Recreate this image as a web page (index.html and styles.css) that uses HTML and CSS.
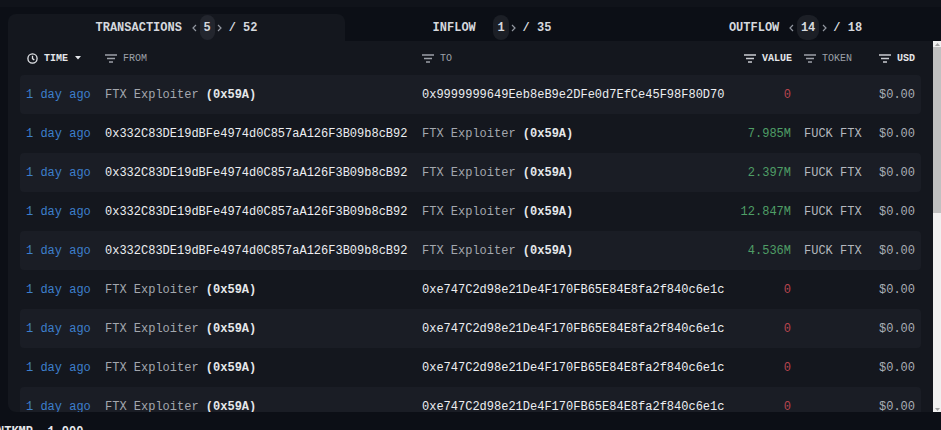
FILE: index.html
```html
<!DOCTYPE html>
<html>
<head>
<meta charset="utf-8">
<link rel="stylesheet" href="styles.css">
</head>
<body>
<div class="topstrip"></div>
<div class="card">
  <div class="tabs">
    <div class="tab active">
      <span class="tab-label">TRANSACTIONS</span>
      <span class="pager">
        <span class="chev"><svg width="5" height="8" viewBox="0 0 5 8"><path d="M4 1 L1 4 L4 7" fill="none" stroke="#9297a0" stroke-width="1.2"/></svg></span>
        <span class="pill">5</span>
        <span class="chev"><svg width="5" height="8" viewBox="0 0 5 8"><path d="M1 1 L4 4 L1 7" fill="none" stroke="#9297a0" stroke-width="1.2"/></svg></span>
        <span class="total">/ 52</span>
      </span>
    </div>
    <div class="tab">
      <span class="tab-label">INFLOW</span>
      <span class="pager">
        <span class="chev hidden"><svg width="5" height="8" viewBox="0 0 5 8"><path d="M4 1 L1 4 L4 7" fill="none" stroke="#9297a0" stroke-width="1.2"/></svg></span>
        <span class="pill">1</span>
        <span class="chev"><svg width="5" height="8" viewBox="0 0 5 8"><path d="M1 1 L4 4 L1 7" fill="none" stroke="#9297a0" stroke-width="1.2"/></svg></span>
        <span class="total">/ 35</span>
      </span>
    </div>
    <div class="tab">
      <span class="tab-label">OUTFLOW</span>
      <span class="pager">
        <span class="chev"><svg width="5" height="8" viewBox="0 0 5 8"><path d="M4 1 L1 4 L4 7" fill="none" stroke="#9297a0" stroke-width="1.2"/></svg></span>
        <span class="pill">14</span>
        <span class="chev"><svg width="5" height="8" viewBox="0 0 5 8"><path d="M1 1 L4 4 L1 7" fill="none" stroke="#9297a0" stroke-width="1.2"/></svg></span>
        <span class="total">/ 18</span>
      </span>
    </div>
  </div>
  <div class="panel">
    <div class="table">
    <div class="head">
      <div class="hcell strong">
        <svg class="ico" width="11" height="11" viewBox="0 0 11 11"><circle cx="5.5" cy="5.5" r="4.6" fill="none" stroke="#e4e6ea" stroke-width="1.3"/><path d="M5.5 2.8 V5.6 L7.3 7" fill="none" stroke="#e4e6ea" stroke-width="1.3"/></svg>
        <span>TIME</span>
        <svg class="caret" width="6" height="4" viewBox="0 0 6 4"><path d="M0 0 H6 L3 3.5 Z" fill="#e4e6ea"/></svg>
      </div>
      <div class="hcell">
        <svg class="ico" width="12" height="9" viewBox="0 0 12 9"><path d="M0 1 H12 M2 4.5 H10 M4 8 H8" stroke="#9ca0a8" stroke-width="1.4"/></svg>
        <span>FROM</span>
      </div>
      <div class="hcell">
        <svg class="ico" width="12" height="9" viewBox="0 0 12 9"><path d="M0 1 H12 M2 4.5 H10 M4 8 H8" stroke="#9ca0a8" stroke-width="1.4"/></svg>
        <span>TO</span>
      </div>
      <div class="hcell strong right pr">
        <svg class="ico" width="12" height="9" viewBox="0 0 12 9"><path d="M0 1 H12 M2 4.5 H10 M4 8 H8" stroke="#c9ccd1" stroke-width="1.4"/></svg>
        <span>VALUE</span>
      </div>
      <div class="hcell pl">
        <svg class="ico" width="12" height="9" viewBox="0 0 12 9"><path d="M0 1 H12 M2 4.5 H10 M4 8 H8" stroke="#9ca0a8" stroke-width="1.4"/></svg>
        <span>TOKEN</span>
      </div>
      <div class="hcell strong right">
        <svg class="ico" width="12" height="9" viewBox="0 0 12 9"><path d="M0 1 H12 M2 4.5 H10 M4 8 H8" stroke="#c9ccd1" stroke-width="1.4"/></svg>
        <span>USD</span>
      </div>
    </div>

    <div class="row">
      <div class="time">1 day ago</div>
      <div><span class="name">FTX Exploiter</span> <b class="tag">(0x59A)</b></div>
      <div class="addr">0x9999999649Eeb8eB9e2DFe0d7EfCe45F98F80D70</div>
      <div class="val neg">0</div>
      <div class="tok"></div>
      <div class="usd">$0.00</div>
    </div>
    <div class="row">
      <div class="time">1 day ago</div>
      <div class="addr">0x332C83DE19dBFe4974d0C857aA126F3B09b8cB92</div>
      <div><span class="name">FTX Exploiter</span> <b class="tag">(0x59A)</b></div>
      <div class="val pos">7.985M</div>
      <div class="tok">FUCK FTX</div>
      <div class="usd">$0.00</div>
    </div>
    <div class="row">
      <div class="time">1 day ago</div>
      <div class="addr">0x332C83DE19dBFe4974d0C857aA126F3B09b8cB92</div>
      <div><span class="name">FTX Exploiter</span> <b class="tag">(0x59A)</b></div>
      <div class="val pos">2.397M</div>
      <div class="tok">FUCK FTX</div>
      <div class="usd">$0.00</div>
    </div>
    <div class="row">
      <div class="time">1 day ago</div>
      <div class="addr">0x332C83DE19dBFe4974d0C857aA126F3B09b8cB92</div>
      <div><span class="name">FTX Exploiter</span> <b class="tag">(0x59A)</b></div>
      <div class="val pos">12.847M</div>
      <div class="tok">FUCK FTX</div>
      <div class="usd">$0.00</div>
    </div>
    <div class="row">
      <div class="time">1 day ago</div>
      <div class="addr">0x332C83DE19dBFe4974d0C857aA126F3B09b8cB92</div>
      <div><span class="name">FTX Exploiter</span> <b class="tag">(0x59A)</b></div>
      <div class="val pos">4.536M</div>
      <div class="tok">FUCK FTX</div>
      <div class="usd">$0.00</div>
    </div>
    <div class="row">
      <div class="time">1 day ago</div>
      <div><span class="name">FTX Exploiter</span> <b class="tag">(0x59A)</b></div>
      <div class="addr">0xe747C2d98e21De4F170FB65E84E8fa2f840c6e1c</div>
      <div class="val neg">0</div>
      <div class="tok"></div>
      <div class="usd">$0.00</div>
    </div>
    <div class="row">
      <div class="time">1 day ago</div>
      <div><span class="name">FTX Exploiter</span> <b class="tag">(0x59A)</b></div>
      <div class="addr">0xe747C2d98e21De4F170FB65E84E8fa2f840c6e1c</div>
      <div class="val neg">0</div>
      <div class="tok"></div>
      <div class="usd">$0.00</div>
    </div>
    <div class="row">
      <div class="time">1 day ago</div>
      <div><span class="name">FTX Exploiter</span> <b class="tag">(0x59A)</b></div>
      <div class="addr">0xe747C2d98e21De4F170FB65E84E8fa2f840c6e1c</div>
      <div class="val neg">0</div>
      <div class="tok"></div>
      <div class="usd">$0.00</div>
    </div>
    <div class="row">
      <div class="time">1 day ago</div>
      <div><span class="name">FTX Exploiter</span> <b class="tag">(0x59A)</b></div>
      <div class="addr">0xe747C2d98e21De4F170FB65E84E8fa2f840c6e1c</div>
      <div class="val neg">0</div>
      <div class="tok"></div>
      <div class="usd">$0.00</div>
    </div>
    </div>
    <div class="vscroll">
      <div class="sb-btn"><svg width="5" height="3" viewBox="0 0 5 3"><path d="M0 3 L2.5 0 L5 3 Z" fill="#a3a3a3"/></svg></div>
      <div class="sb-track"><div class="sb-thumb"></div></div>
      <div class="sb-btn"><svg width="5" height="3" viewBox="0 0 5 3"><path d="M0 0 L2.5 3 L5 0 Z" fill="#a3a3a3"/></svg></div>
    </div>
  </div>
</div>
<div class="footer">NTKMP &nbsp;1,000</div>
</body>
</html>
```
FILE: styles.css
```css
html, body {
  margin: 0;
  padding: 0;
  background: #0c0f16;
  font-family: "Liberation Mono", "DejaVu Sans Mono", monospace;
  color: #e6e8eb;
  overflow: hidden;
}
.topstrip {
  height: 7px;
  background: #10131a;
}
.card {
  margin: 7px 0 0 8px;
  width: 933px;
  overflow: hidden;
}
.tabs {
  display: grid;
  grid-template-columns: 337px 294px 313px;
  height: 27px;
}
.tab {
  display: flex;
  align-items: center;
  justify-content: center;
  font-size: 12px;
  font-weight: bold;
  color: #d5d8dd;
  white-space: nowrap;
}
.tab.active {
  background: #14171e;
  border-radius: 8px 8px 0 0;
}
.pager {
  display: flex;
  align-items: center;
  margin-left: 7.6px;
}
.chev {
  width: 10px;
  display: flex;
  justify-content: center;
  align-items: center;
}
.chev.hidden {
  visibility: hidden;
}
.pill {
  height: 25px;
  padding: 0 4px;
  border-radius: 9px;
  display: flex;
  align-items: center;
  background: #1c1f26;
}
.tab.active .pill {
  background: #23262e;
}
.total {
  margin-left: 4px;
}
.panel {
  background: #14171e;
  height: 371px;
  display: flex;
  border-radius: 0 0 0 8px;
}
.table {
  flex: 1;
  overflow: hidden;
}
.vscroll {
  width: 8px;
  flex: none;
  display: flex;
  flex-direction: column;
  background: #f1f1f1;
}
.sb-btn {
  height: 6px;
  display: flex;
  align-items: center;
  justify-content: center;
}
.sb-track {
  flex: 1;
}
.sb-thumb {
  height: 166px;
  background: #c1c1c1;
}
.head, .row {
  display: grid;
  grid-template-columns: 79px 317px 308px 68px 72px 45px;
  margin: 0 12px;
  padding: 0 6px;
  align-items: center;
}
.head {
  height: 34px;
  font-size: 10px;
  color: #9ca0a8;
}
.hcell {
  display: flex;
  align-items: center;
  gap: 6px;
}
.hcell .ico {
  flex: none;
}
.hcell.strong {
  color: #e4e6ea;
  font-weight: bold;
}
.hcell.strong:first-child .ico {
  margin-left: 1px;
}
.caret {
  margin-left: 1px;
}
.hcell.right {
  justify-content: flex-end;
}
.pr {
  padding-right: 6px;
}
.pl {
  padding-left: 6px;
}
.row {
  height: 39px;
  font-size: 12px;
  border-radius: 4px;
  white-space: nowrap;
}
.row:nth-child(even) {
  background: #1a1d25;
}
.time {
  color: #3d7fcc;
}
.name {
  color: #a3a7ae;
}
.tag {
  color: #e6e8eb;
}
.addr {
  color: #eceef1;
}
.val {
  text-align: right;
  padding-right: 7px;
}
.neg {
  color: #b8444e;
}
.pos {
  color: #4f9e66;
}
.tok {
  padding-left: 6px;
  color: #b4b8be;
}
.usd {
  text-align: right;
  color: #a9adb4;
}
.footer {
  margin-top: 13px;
  margin-left: -3px;
  font-size: 12px;
  font-weight: bold;
  color: #e6e8eb;
  white-space: pre;
}
```
